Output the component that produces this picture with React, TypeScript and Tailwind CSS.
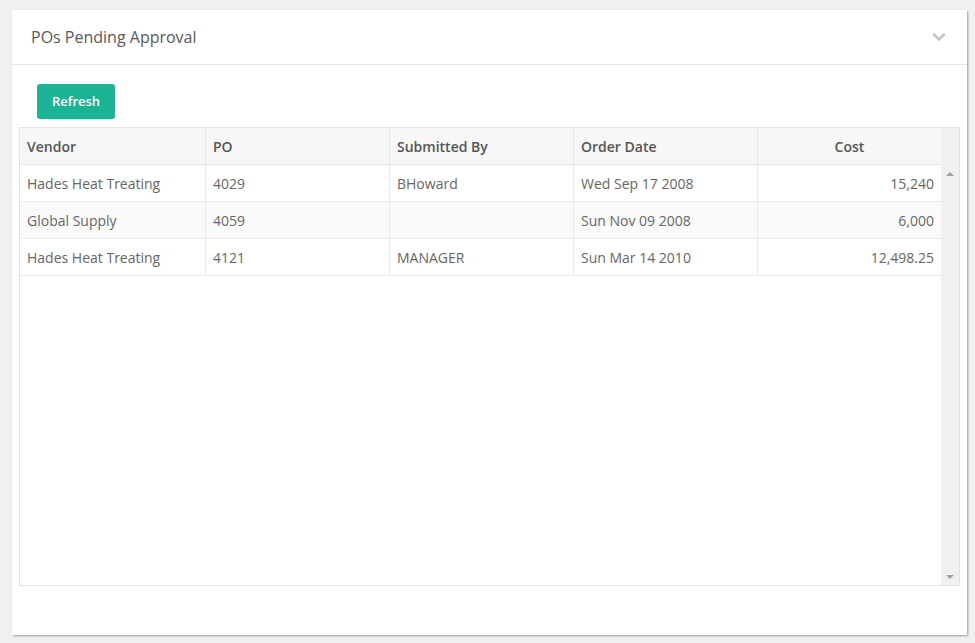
import { ChevronDown } from 'lucide-react';

const rows = [
  { vendor: 'Hades Heat Treating', po: '4029', by: 'BHoward', date: 'Wed Sep 17 2008', cost: '15,240' },
  { vendor: 'Global Supply', po: '4059', by: '', date: 'Sun Nov 09 2008', cost: '6,000' },
  { vendor: 'Hades Heat Treating', po: '4121', by: 'MANAGER', date: 'Sun Mar 14 2010', cost: '12,498.25' },
];

const cols = 'grid grid-cols-[186px_184px_184px_184px_183px]';

export default function App() {
  return (
    <div className="h-[643px] w-[975px] bg-[#f0f0f0] pt-[10px] pl-[12px] pr-[8px] pb-[8px] text-[#555]" style={{ fontFamily: '"Open Sans", sans-serif' }}>
      <div className="flex h-[625px] flex-col bg-white shadow-[1px_1px_2px_rgba(0,0,0,0.35)]">
        {/* Header */}
        <div className="flex h-[55px] items-center justify-between border-b border-[#e5e5e5] pl-[19px] pr-[18px]">
          <span className="text-[16px] text-[#595959]">POs Pending Approval</span>
          <ChevronDown className="h-5 w-5 text-[#c4c4c4]" strokeWidth={3} />
        </div>
        <div className="pl-[7px] pr-[7px] pt-[19px]">
          <button className="ml-[18px] h-[35px] w-[78px] rounded-[3px] bg-[#1ab394] text-[13px] font-semibold text-white">
            Refresh
          </button>
          <div className="mt-[8px] flex h-[459px] w-[941px] border border-[#e2e2e2]">
            <div className="flex-1">
              <div className={`${cols} h-[37px] border-b border-[#e6e6e6] bg-[#f7f7f7] text-[14px] font-semibold text-[#555]`}>
                <div className="flex items-center border-r border-[#e6e6e6] px-[7px]">Vendor</div>
                <div className="flex items-center border-r border-[#e6e6e6] px-[7px]">PO</div>
                <div className="flex items-center border-r border-[#e6e6e6] px-[7px]">Submitted By</div>
                <div className="flex items-center border-r border-[#e6e6e6] px-[7px]">Order Date</div>
                <div className="flex items-center justify-center">Cost</div>
              </div>
              {rows.map((r, i) => (
                <div key={i} className={`${cols} h-[37px] border-b border-[#ebebeb] text-[14px] text-[#666] ${i === 1 ? 'bg-[#fafafa]' : 'bg-white'}`}>
                  <div className="flex items-center border-r border-[#ebebeb] px-[7px]">{r.vendor}</div>
                  <div className="flex items-center border-r border-[#ebebeb] px-[7px]">{r.po}</div>
                  <div className="flex items-center border-r border-[#ebebeb] px-[7px]">{r.by}</div>
                  <div className="flex items-center border-r border-[#ebebeb] px-[7px]">{r.date}</div>
                  <div className="flex items-center justify-end px-[7px]">{r.cost}</div>
                </div>
              ))}
            </div>
            <div className="flex w-[21px] flex-col justify-between bg-[#f0f0f0] pt-[44px] pb-[6px]">
              <div className="mx-auto h-0 w-0 border-x-[4px] border-b-[4px] border-x-transparent border-b-[#a0a0a0]" />
              <div className="mx-auto h-0 w-0 border-x-[4px] border-t-[4px] border-x-transparent border-t-[#a0a0a0]" />
            </div>
          </div>
        </div>
      </div>
    </div>
  );
}
